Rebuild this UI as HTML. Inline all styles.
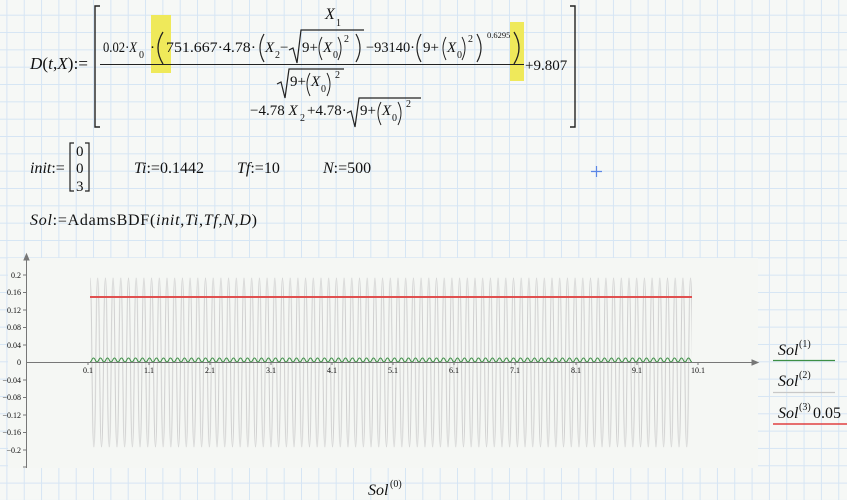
<!DOCTYPE html>
<html><head><meta charset="utf-8"><style>
html,body{margin:0;padding:0;background:#f6f8f6;}
svg{display:block;}
text{font-family:"Liberation Serif",serif;fill:#111;}
.i{font-style:italic;}
</style></head><body>
<svg width="847" height="500" viewBox="0 0 847 500" xmlns="http://www.w3.org/2000/svg">
<defs>
<pattern id="grid" x="6.4" y="14.7" width="17.33" height="17.33" patternUnits="userSpaceOnUse">
<path d="M0.5 0V17.33M0 0.5H17.33" stroke="#d6e5f4" stroke-width="1" fill="none"/>
</pattern>
<pattern id="wave" x="90" y="0" width="7.7" height="500" patternUnits="userSpaceOnUse">
<path d="M0 278 C2 278 1.85 447 3.85 447 C5.85 447 5.7 278 7.7 278" stroke="#cfcfcf" stroke-width="1" fill="none"/>
</pattern>
<pattern id="gw" x="90" y="0" width="7" height="500" patternUnits="userSpaceOnUse">
<path d="M0 362 C1.7 362 1.8 358 3.5 358 C5.2 358 5.3 362 7 362" stroke="#3d8f45" stroke-width="1" fill="none"/>
</pattern>
</defs>
<rect width="847" height="500" fill="#f6f8f6"/>
<rect width="847" height="500" fill="url(#grid)"/>

<!-- formula D -->
<text x="30" y="69" font-size="17" textLength="58" lengthAdjust="spacing"><tspan class="i">D</tspan>(<tspan class="i">t</tspan>,<tspan class="i">X</tspan>):=</text>
<path d="M100 6H95V127H100M570 6H575V127H570" stroke="#222" stroke-width="1.4" fill="none"/>
<text x="325" y="19" font-size="16" class="i">X</text><text x="336" y="26" font-size="10">1</text>
<rect x="151" y="15" width="20" height="58" fill="#efe95a"/>
<rect x="510" y="22" width="14" height="59" fill="#efe95a"/>
<text x="103" y="52" font-size="15" textLength="34" lengthAdjust="spacingAndGlyphs">0.02·<tspan class="i">X</tspan></text>
<text x="139" y="58" font-size="10">0</text>
<text x="150" y="52" font-size="15">·</text>
<path d="M163 32Q153 48 163 64" stroke="#222" stroke-width="1.3" fill="none"/>
<text x="166" y="52" font-size="15" textLength="90" lengthAdjust="spacingAndGlyphs">751.667·4.78·</text>
<path d="M264 34Q256 48 264 62" stroke="#222" stroke-width="1.2" fill="none"/>
<text x="265" y="52" font-size="15" class="i">X</text><text x="275" y="58" font-size="10">2</text>
<text x="280" y="52" font-size="15">−</text>
<path d="M289 50L293 48L297 63L301 30H364" stroke="#222" stroke-width="1.2" fill="none"/>
<text x="302" y="52" font-size="15">9+</text>
<path d="M322 37Q316 48 322 60" stroke="#222" stroke-width="1" fill="none"/>
<text x="323" y="52" font-size="15" class="i">X</text><text x="333" y="58" font-size="10">0</text>
<path d="M338 37Q344 48 338 60" stroke="#222" stroke-width="1" fill="none"/>
<text x="344" y="42" font-size="10">2</text>
<path d="M356 34Q364 48 356 62" stroke="#222" stroke-width="1.2" fill="none"/>
<text x="366" y="52" font-size="15" textLength="49" lengthAdjust="spacingAndGlyphs">−93140·</text>
<path d="M421 34Q413 48 421 62" stroke="#222" stroke-width="1.2" fill="none"/>
<text x="423" y="52" font-size="15">9+</text>
<path d="M446 37Q440 48 446 60" stroke="#222" stroke-width="1" fill="none"/>
<text x="447" y="52" font-size="15" class="i">X</text><text x="457" y="58" font-size="10">0</text>
<path d="M462 37Q468 48 462 60" stroke="#222" stroke-width="1" fill="none"/>
<text x="468" y="42" font-size="10">2</text>
<path d="M477 34Q485 48 477 62" stroke="#222" stroke-width="1.2" fill="none"/>
<text x="487" y="38" font-size="8.5">0.6295</text>
<path d="M514 32Q524 48 514 64" stroke="#222" stroke-width="1.3" fill="none"/>
<line x1="100" y1="64.5" x2="524" y2="64.5" stroke="#222" stroke-width="1"/>
<text x="525" y="70" font-size="15">+9.807</text>
<!-- denominator -->
<path d="M277 84L281 82L285 98L289 69H344" stroke="#222" stroke-width="1.2" fill="none"/>
<text x="290" y="86" font-size="15">9+</text>
<path d="M310 73Q304 84 310 96" stroke="#222" stroke-width="1" fill="none"/>
<text x="311" y="86" font-size="15" class="i">X</text><text x="321" y="92" font-size="10">0</text>
<path d="M327 73Q333 84 327 96" stroke="#222" stroke-width="1" fill="none"/>
<text x="335" y="78" font-size="10">2</text>
<!-- third row -->
<text x="250" y="115" font-size="15">−4.78 <tspan class="i">X</tspan></text>
<text x="300" y="121" font-size="10">2</text>
<text x="307" y="115" font-size="15">+4.78·</text>
<path d="M347 113L351 111L355 127L359 98H421" stroke="#222" stroke-width="1.2" fill="none"/>
<text x="360" y="115" font-size="15">9+</text>
<path d="M381 102Q375 113 381 125" stroke="#222" stroke-width="1" fill="none"/>
<text x="382" y="115" font-size="15" class="i">X</text><text x="392" y="121" font-size="10">0</text>
<path d="M398 102Q404 113 398 125" stroke="#222" stroke-width="1" fill="none"/>
<text x="406" y="107" font-size="10">2</text>

<!-- row 2 -->
<text x="30" y="173" font-size="16"><tspan class="i">init</tspan>:=</text>
<path d="M74 143H70V191H74M85 143H89V191H85" stroke="#222" stroke-width="1.2" fill="none"/>
<text x="76" y="156" font-size="15">0</text>
<text x="76" y="173" font-size="15">0</text>
<text x="76" y="191" font-size="15">3</text>
<text x="134" y="173" font-size="16"><tspan class="i">Ti</tspan>:=0.1442</text>
<text x="237" y="173" font-size="16"><tspan class="i">Tf</tspan>:=10</text>
<text x="323" y="173" font-size="16"><tspan class="i">N</tspan>:=500</text>
<path d="M591 171.5H602M596.5 166V177" stroke="#5b86e6" stroke-width="1.2"/>
<text x="30" y="225" font-size="16" textLength="227" lengthAdjust="spacing"><tspan class="i">Sol</tspan>:=AdamsBDF(<tspan class="i">init</tspan>,<tspan class="i">Ti</tspan>,<tspan class="i">Tf</tspan>,<tspan class="i">N</tspan>,<tspan class="i">D</tspan>)</text>

<!-- plot -->
<rect x="8" y="258" width="750" height="210" fill="#f5f7f4"/>
<rect x="90" y="270" width="602" height="185" fill="url(#wave)"/>
<line x1="90" y1="297" x2="692" y2="297" stroke="#e05050" stroke-width="2"/>
<rect x="90" y="355" width="602" height="10" fill="url(#gw)"/>
<g stroke="#777" stroke-width="1">
<line x1="26.5" y1="260" x2="26.5" y2="468"/>
<line x1="26" y1="362.5" x2="754" y2="362.5"/>
<path d="M24 260L26.5 254L29 260Z M752 360L758 362.5L752 365Z" fill="#777"/>
<path d="M23 275H27M23 292.5H27M23 310H27M23 327.5H27M23 345H27M23 380H27M23 397.5H27M23 415H27M23 432.5H27M23 450H27M23 467H27"/>
<path d="M88 362V365M149 362V365M210 362V365M271 362V365M332 362V365M393 362V365M454 362V365M515 362V365M576 362V365M637 362V365M698 362V365"/>
</g>
<g font-size="8" fill="#555" text-anchor="end">
<text x="21" y="278" fill="#555">0.2</text>
<text x="21" y="295" fill="#555">0.16</text>
<text x="21" y="313" fill="#555">0.12</text>
<text x="21" y="330" fill="#555">0.08</text>
<text x="21" y="348" fill="#555">0.04</text>
<text x="21" y="365" fill="#555">0</text>
<text x="21" y="383" fill="#555">−0.04</text>
<text x="21" y="400" fill="#555">−0.08</text>
<text x="21" y="418" fill="#555">−0.12</text>
<text x="21" y="435" fill="#555">−0.16</text>
<text x="21" y="453" fill="#555">−0.2</text>
</g>
<g font-size="8" text-anchor="middle">
<text x="88" y="373" fill="#555">0.1</text>
<text x="149" y="373" fill="#555">1.1</text>
<text x="210" y="373" fill="#555">2.1</text>
<text x="271" y="373" fill="#555">3.1</text>
<text x="332" y="373" fill="#555">4.1</text>
<text x="393" y="373" fill="#555">5.1</text>
<text x="454" y="373" fill="#555">6.1</text>
<text x="515" y="373" fill="#555">7.1</text>
<text x="576" y="373" fill="#555">8.1</text>
<text x="637" y="373" fill="#555">9.1</text>
<text x="698" y="373" fill="#555">10.1</text>
</g>
<text x="368" y="495" font-size="16"><tspan class="i">Sol</tspan></text>
<text x="390" y="487" font-size="10">(0)</text>
<!-- legend -->
<text x="778" y="355" font-size="16" class="i">Sol</text><text x="799" y="347" font-size="10">(1)</text>
<line x1="773" y1="360.5" x2="835" y2="360.5" stroke="#3d8f45" stroke-width="1.2"/>
<text x="778" y="386" font-size="16" class="i">Sol</text><text x="799" y="378" font-size="10">(2)</text>
<line x1="773" y1="392.5" x2="835" y2="392.5" stroke="#c8c8c8" stroke-width="1.2"/>
<text x="778" y="418" font-size="16" class="i">Sol</text><text x="799" y="410" font-size="10">(3)</text>
<text x="813" y="418" font-size="16">0.05</text>
<line x1="773" y1="424" x2="847" y2="424" stroke="#e04040" stroke-width="1.6"/>
</svg>
</body></html>
